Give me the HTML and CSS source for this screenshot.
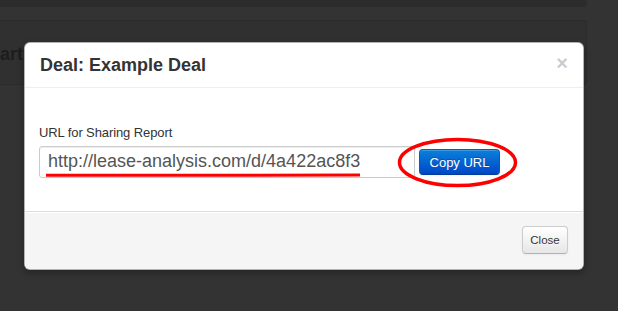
FILE: index.html
```html
<!DOCTYPE html>
<html lang="en">
<head>
<meta charset="utf-8">
<title>Deal: Example Deal</title>
<link rel="stylesheet" href="styles.css">
</head>
<body>
<div class="page">
  <div class="topbar"></div>
  <div class="well">
    <h2 class="well-title">art</h2>
  </div>
</div>

<div class="modal">
  <div class="modal-header">
    <h3 class="modal-title">Deal: Example Deal</h3>
    <span class="close">&times;</span>
  </div>
  <div class="modal-body">
    <label class="field-label">URL for Sharing Report</label>
    <div class="field-row">
      <div class="url-input">http://lease-analysis.com/d/4a422ac8f3</div>
      <button class="btn btn-primary">Copy URL</button>
    </div>
  </div>
  <div class="modal-footer">
    <button class="btn btn-default">Close</button>
  </div>
</div>

<svg class="annotations" width="618" height="311" viewBox="0 0 618 311">
  <path d="M46 175.3 C150 175.1 260 175.2 360 175.1" stroke="#ff0000" stroke-width="3" fill="none" stroke-linecap="butt"/>
  <ellipse cx="457.5" cy="162.5" rx="58" ry="23" stroke="#ff0000" stroke-width="3.5" fill="none"/>
</svg>
</body>
</html>
```

FILE: styles.css
```css
html, body {
  margin: 0;
  padding: 0;
}

body {
  background: #333333;
  width: 618px;
  height: 311px;
  overflow: hidden;
  position: relative;
  font-family: "Liberation Sans", Arial, sans-serif;
}

.page {
  width: 587px;
}

.topbar {
  height: 7px;
  background: #2c2c2c;
  border-radius: 0 0 4px 0;
}

.well {
  margin-top: 13px;
  height: 65px;
  box-sizing: border-box;
  background: #303030;
  border: 1px solid #2b2b2b;
  border-left: none;
  border-radius: 0 4px 4px 0;
  padding: 20px 0 0 0;
  overflow: hidden;
}

.well-title {
  margin: 0;
  font-size: 18px;
  font-weight: bold;
  line-height: 26px;
  color: #1d1d1d;
  white-space: nowrap;
}

.modal {
  position: absolute;
  top: 42px;
  left: 24px;
  width: 560px;
  box-sizing: border-box;
  background: #ffffff;
  border: 1px solid rgba(0, 0, 0, 0.3);
  border-radius: 6px;
  box-shadow: 0 3px 7px rgba(0, 0, 0, 0.3);
  overflow: hidden;
}

.modal-header {
  display: flex;
  align-items: flex-start;
  justify-content: space-between;
  padding: 9px 15px;
  border-bottom: 1px solid #eeeeee;
}

.modal-title {
  margin: 0;
  font-size: 18px;
  font-weight: bold;
  line-height: 26px;
  color: #333333;
}

.close {
  margin-top: 1px;
  margin-right: 0;
  font-size: 20px;
  font-weight: bold;
  line-height: 20px;
  color: #000000;
  opacity: 0.2;
}

.modal-body {
  padding: 36px 14px 33px 14px;
}

.field-label {
  display: block;
  font-size: 13px;
  line-height: 18px;
  color: #333333;
  margin-bottom: 4px;
  letter-spacing: -0.1px;
}

.field-row {
  display: flex;
  align-items: center;
  gap: 4px;
}

.url-input {
  width: 376px;
  height: 32px;
  box-sizing: border-box;
  border: 1px solid #cccccc;
  border-radius: 3px;
  box-shadow: inset 0 1px 1px rgba(0, 0, 0, 0.075);
  padding: 0 8px;
  font-size: 18px;
  line-height: 28px;
  color: #555555;
  white-space: nowrap;
  overflow: hidden;
}

.btn {
  box-sizing: border-box;
  font-family: "Liberation Sans", Arial, sans-serif;
  border-radius: 4px;
  cursor: pointer;
  padding: 0;
  margin: 0;
}

.btn-primary {
  width: 81px;
  height: 26px;
  font-size: 13px;
  color: #ffffff;
  text-shadow: 0 -1px 0 rgba(0, 0, 0, 0.25);
  background: linear-gradient(to bottom, #0a80da, #0047c8);
  border: 1px solid #0a5bb8;
  border-bottom-color: #023c9a;
  box-shadow: inset 0 1px 0 rgba(255, 255, 255, 0.2), 0 1px 2px rgba(0, 0, 0, 0.05);
}

.modal-footer {
  display: flex;
  justify-content: flex-end;
  padding: 14px 15px 15px;
  background: #f5f5f5;
  border-top: 1px solid #dddddd;
  box-shadow: inset 0 1px 0 #ffffff;
}

.btn-default {
  width: 46px;
  height: 28px;
  font-size: 11.5px;
  color: #333333;
  text-shadow: 0 1px 1px rgba(255, 255, 255, 0.75);
  background: linear-gradient(to bottom, #ffffff, #e6e6e6);
  border: 1px solid #cccccc;
  border-bottom-color: #b3b3b3;
  box-shadow: inset 0 1px 0 rgba(255, 255, 255, 0.2), 0 1px 2px rgba(0, 0, 0, 0.05);
}

.annotations {
  position: absolute;
  top: 0;
  left: 0;
  pointer-events: none;
}
```
